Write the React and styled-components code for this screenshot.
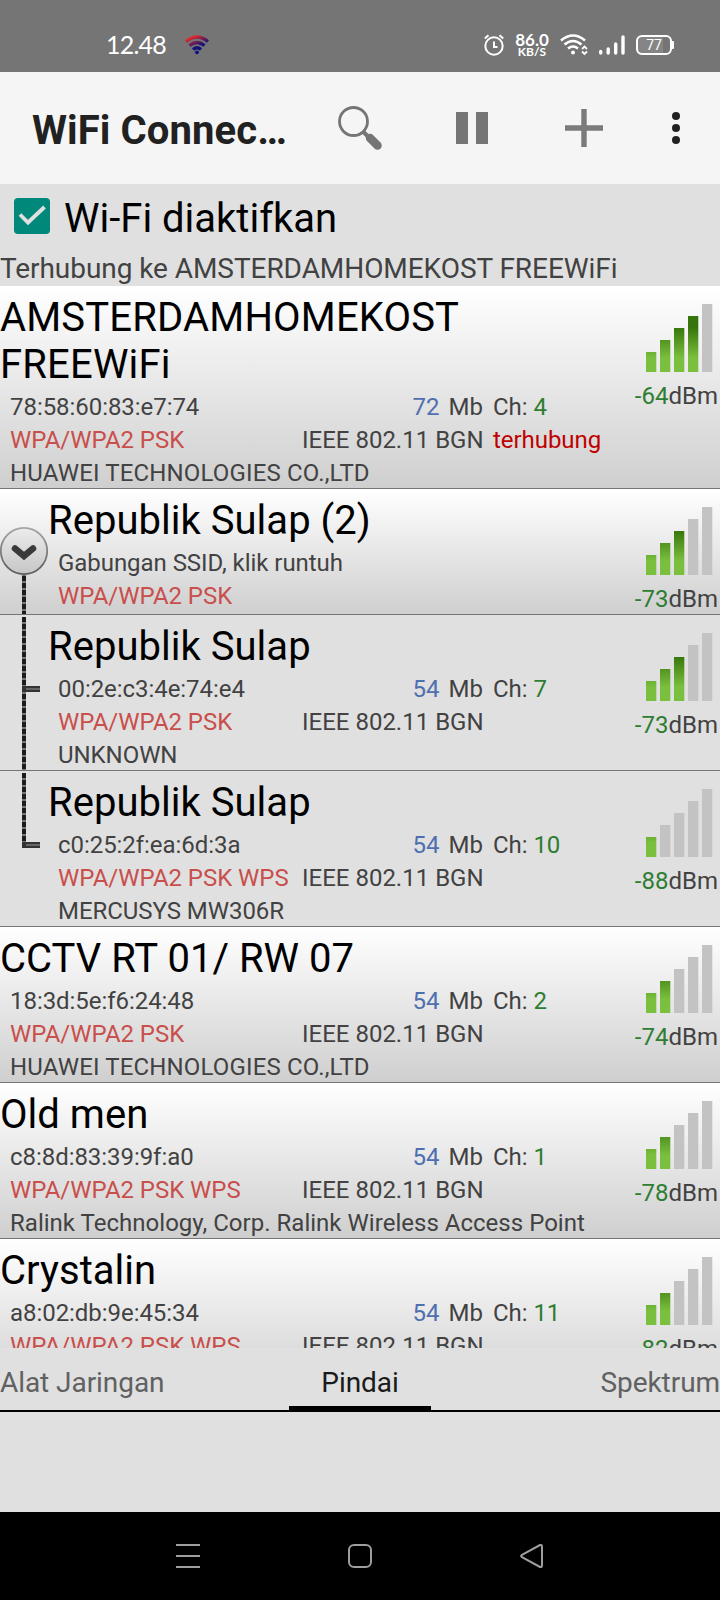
import React from "react";
import styled, { createGlobalStyle } from "styled-components";

const GlobalStyle = createGlobalStyle`
  * {
    box-sizing: border-box;
  }
  body {
    margin: 0;
    background: #e0e0e0;
    font-family: Roboto, "Noto Sans", sans-serif;
  }
`;

const Screen = styled.div`
  display: flex;
  flex-direction: column;
  width: 720px;
  height: 1600px;
  overflow: hidden;
  background: #e0e0e0;
`;

const StatusBar = styled.div`
  display: flex;
  justify-content: space-between;
  height: 72px;
  padding: 18px 48px 0 106px;
  background: #757575;
  color: #fff;
`;

const StatusGroup = styled.div`
  display: flex;
  align-items: center;
  height: 54px;
  gap: ${(props) => props.gap};
`;

const Clock = styled.span`
  margin-top: -2px;
  font-family: Lato, sans-serif;
  font-size: 25px;
  line-height: 54px;
  letter-spacing: -0.8px;
`;

const Speed = styled.div`
  display: flex;
  flex-direction: column;
  align-items: center;
  width: 34px;
  font-family: Lato, sans-serif;
  font-weight: 700;
  font-size: 17px;
  line-height: 13px;
  white-space: nowrap;

  small {
    font-size: 12px;
    line-height: 12px;
  }
`;

const Battery = styled.div`
  position: relative;
  width: 36px;
  height: 20px;
  border: 2px solid #fff;
  border-radius: 6px;
  font-size: 14px;
  line-height: 17px;
  text-align: center;
  background: linear-gradient(to right, #858585 77%, #757575 77%);

  &::after {
    content: "";
    position: absolute;
    right: -4px;
    top: 4px;
    width: 2px;
    height: 8px;
    background: #fff;
    border-radius: 0 1px 1px 0;
  }
`;

const AppBar = styled.header`
  display: flex;
  align-items: center;
  height: 112px;
  background: #f5f5f5;
`;

const AppTitle = styled.h1`
  width: 288px;
  margin: 5px 0 0;
  padding-left: 32px;
  font-size: 40px;
  font-weight: 700;
  line-height: 47px;
  letter-spacing: 0.1px;
  color: #212121;
  white-space: nowrap;
`;

const Action = styled.span`
  display: flex;
  align-items: center;
  justify-content: center;
  width: ${(props) => props.width};
  height: 112px;
`;

const WifiToggle = styled.label`
  display: flex;
  align-items: flex-start;
  height: 66px;
  padding: 14px 0 0 14px;
  font-size: 40px;
  line-height: 47px;
  color: #000;
`;

const CheckBox = styled.span`
  display: flex;
  width: 36px;
  height: 36px;
  margin-right: 14px;
  border-radius: 4px;
  background: #00897b;
`;

const ToggleText = styled.span`
  margin-top: -3px;
`;

const Connection = styled.div`
  height: 36px;
  font-size: 28px;
  line-height: 38px;
  letter-spacing: -0.06px;
  color: #424242;
`;

const List = styled.main`
  height: 1062px;
  overflow: hidden;
`;

const Row = styled.section`
  display: flex;
  height: ${(props) => props.height}px;
  border-bottom: 1px solid #757575;
  background: ${(props) => (props.child ? "#e0e0e0" : "linear-gradient(#fff, #cfcfcf)")};
`;

const Tree = styled.div`
  flex: none;
  width: 48px;
`;

const Body = styled.div`
  flex: 1;
  min-width: 0;
`;

const Ssid = styled.h2`
  margin: 0;
  padding: 8px 0 2px;
  font-size: 40px;
  font-weight: 400;
  line-height: 47px;
  letter-spacing: ${(props) => (props.wide ? "0.17px" : "0.03px")};
  color: #000;
`;

const Line = styled.div`
  display: flex;
  height: 33px;
  padding-left: 10px;
  font-size: 24px;
  line-height: 34px;
  letter-spacing: ${(props) => props.tracking || "-0.05px"};
  color: #424242;
  white-space: nowrap;
`;

const Left = styled.span`
  width: ${(props) => (props.nested ? 244 : 292)}px;
  color: ${(props) => props.color || "inherit"};
`;

const Middle = styled.span`
  width: 181px;
  margin-right: 10px;
  text-align: right;
  letter-spacing: 0;
`;

const Tint = styled.span`
  color: ${(props) => props.color};
  margin-right: ${(props) => props.gap || "0"};
`;

const Level = styled.div`
  display: flex;
  flex-direction: column;
  align-items: flex-end;
  width: 100px;
  padding: 16px 2px 0 0;
  font-size: 24px;
  line-height: 28px;
  color: #424242;

  svg {
    margin: 0 4px 10px 0;
  }
`;

const Tabs = styled.nav`
  display: grid;
  grid-template-columns: 1fr auto 1fr;
  height: 64px;
  border-bottom: 2px solid #000;
  font-size: 28px;
  line-height: 69px;
  letter-spacing: -0.06px;
`;

const Tab = styled.span`
  position: relative;
  height: 64px;
  text-align: ${(props) => props.align || "left"};
  color: ${(props) => (props.active ? "#1a1a1a" : "#616161")};

  &::after {
    content: "";
    display: ${(props) => (props.active ? "block" : "none")};
    position: absolute;
    left: -32px;
    right: -32px;
    bottom: 0;
    height: 6px;
    background: #000;
  }
`;

const NavBar = styled.footer`
  display: flex;
  align-items: center;
  justify-content: space-between;
  height: 88px;
  margin-top: 100px;
  padding: 0 175px;
  background: #000;
`;

const red = "#c94f4c";
const green = "#2e7d32";
const blue = "#4f6fb0";

const networks = [
  { ssid: "AMSTERDAMHOMEKOST FREEWiFi", mac: "78:58:60:83:e7:74", rate: 72, channel: 4, security: "WPA/WPA2 PSK", vendor: "HUAWEI TECHNOLOGIES CO.,LTD", dbm: -64, bars: 4, height: 203, connected: true },
  { ssid: "Republik Sulap (2)", info: "Gabungan SSID, klik runtuh", security: "WPA/WPA2 PSK", dbm: -73, bars: 3, height: 126, tree: "group" },
  { ssid: "Republik Sulap", mac: "00:2e:c3:4e:74:e4", rate: 54, channel: 7, security: "WPA/WPA2 PSK", vendor: "UNKNOWN", dbm: -73, bars: 3, height: 156, tree: "branch" },
  { ssid: "Republik Sulap", mac: "c0:25:2f:ea:6d:3a", rate: 54, channel: 10, security: "WPA/WPA2 PSK WPS", vendor: "MERCUSYS MW306R", dbm: -88, bars: 1, height: 156, tree: "last" },
  { ssid: "CCTV RT 01/ RW 07", mac: "18:3d:5e:f6:24:48", rate: 54, channel: 2, security: "WPA/WPA2 PSK", vendor: "HUAWEI TECHNOLOGIES CO.,LTD", dbm: -74, bars: 2, height: 156 },
  { ssid: "Old men", mac: "c8:8d:83:39:9f:a0", rate: 54, channel: 1, security: "WPA/WPA2 PSK WPS", vendor: "Ralink Technology, Corp. Ralink Wireless Access Point", dbm: -78, bars: 2, height: 156 },
  { ssid: "Crystalin", mac: "a8:02:db:9e:45:34", rate: 54, channel: 11, security: "WPA/WPA2 PSK WPS", vendor: "", dbm: -82, bars: 2, height: 156 },
];

const vendorTracking = (vendor) => {
  if (vendor.startsWith("HUAWEI")) return "0.15px";
  if (vendor.startsWith("Ralink")) return "0.02px";
  return "-0.05px";
};

function SignalBars({ bars }) {
  return (
    <svg width="68" height="70" viewBox="0 0 68 70">
      <defs>
        <linearGradient id="signal" gradientUnits="userSpaceOnUse" x1="0" y1="14" x2="0" y2="70">
          <stop offset="0.2" stopColor="#35750b" />
          <stop offset="0.75" stopColor="#7bbf3e" />
        </linearGradient>
      </defs>
      {[0, 1, 2, 3, 4].map((i) => (
        <rect
          key={i}
          x={i * 14}
          y={50 - i * 12}
          width="10.3"
          height={20 + i * 12}
          fill={i < bars ? "url(#signal)" : "#c3c3c3"}
        />
      ))}
    </svg>
  );
}

function TreeMark({ type, height }) {
  if (type === "group") {
    return (
      <svg width="48" height="125" viewBox="0 0 48 125">
        <defs>
          <linearGradient id="knob" x1="0" y1="0" x2="0" y2="1">
            <stop offset="0" stopColor="#ececec" />
            <stop offset="1" stopColor="#c6c6c6" />
          </linearGradient>
          <linearGradient id="knobEdge" x1="0" y1="0" x2="0" y2="1">
            <stop offset="0" stopColor="#a5a5a5" />
            <stop offset="1" stopColor="#5c5c5c" />
          </linearGradient>
        </defs>
        <path d="M24 86V125" stroke="#777" strokeWidth="4" />
        <path d="M24 87V125" stroke="#1c1c1c" strokeWidth="4" strokeDasharray="5 2" />
        <circle cx="24" cy="62" r="23.200" fill="url(#knob)" stroke="url(#knobEdge)" strokeWidth="1.800" />
        <path
          d="M15 59.500L24 67L33 59.500"
          fill="none"
          stroke="#3a3a3a"
          strokeWidth="6.500"
          strokeLinecap="round"
        />
      </svg>
    );
  }
  const end = type === "last" ? 76 : height - 1;
  return (
    <svg width="48" height="155" viewBox="0 0 48 155">
      <path d={`M24 2V${end}`} stroke="#777" strokeWidth="4" />
      <path d={`M24 2V${end}`} stroke="#1c1c1c" strokeWidth="4" strokeDasharray="5 2" />
      <path d="M22 74H40" stroke="#333" strokeWidth="6" />
      <path d="M26 74H40" stroke="#666" strokeWidth="2" />
    </svg>
  );
}

function NetworkRow({ network }) {
  const { ssid, mac, rate, channel, security, vendor, dbm, bars, height, tree, info, connected } = network;
  const nested = Boolean(tree);

  return (
    <Row height={height} child={tree === "branch" || tree === "last" ? 1 : 0}>
      {nested && (
        <Tree>
          <TreeMark type={tree} height={height} />
        </Tree>
      )}
      <Body>
        <Ssid wide={connected ? 1 : 0}>{ssid}</Ssid>
        {info ? (
          <Line>{info}</Line>
        ) : (
          <Line>
            <Left nested={nested ? 1 : 0}>{mac}</Left>
            <Middle>
              <Tint color={blue} gap="9px">{rate}</Tint>
              Mb
            </Middle>
            <span>
              Ch: <Tint color={green}>{channel}</Tint>
            </span>
          </Line>
        )}
        <Line>
          <Left nested={nested ? 1 : 0} color={red}>{security}</Left>
          {!info && <Middle>IEEE 802.11 BGN</Middle>}
          {connected && <Tint color="#c00000">terhubung</Tint>}
        </Line>
        {vendor && <Line tracking={vendorTracking(vendor)}>{vendor}</Line>}
      </Body>
      <Level>
        <SignalBars bars={bars} />
        <span>
          <Tint color={green}>{dbm}</Tint>dBm
        </span>
      </Level>
    </Row>
  );
}

function App() {
  return (
    <>
      <GlobalStyle />
      <Screen>
        <StatusBar>
          <StatusGroup gap="19px">
            <Clock>12.48</Clock>
            <svg width="24" height="20" viewBox="0 0 24 20" fill="none">
              <defs>
                <linearGradient id="wifi" gradientUnits="userSpaceOnUse" x1="8" y1="0" x2="14" y2="14">
                  <stop offset="0.1" stopColor="#e02a2a" />
                  <stop offset="0.85" stopColor="#10107c" />
                </linearGradient>
              </defs>
              <g stroke="url(#wifi)" strokeWidth="3.200">
                <path d="M1 6.500Q12 -2.500 23 6.500" />
                <path d="M4.500 10.500Q12 4.500 19.500 10.500" />
                <path d="M8 14.500Q12 11 16 14.500" />
              </g>
              <circle cx="12" cy="17.300" r="1.900" fill="#10107c" />
            </svg>
          </StatusGroup>
          <StatusGroup gap="11px">
            <svg width="20" height="22" viewBox="0 0 20 22" fill="none" stroke="#fff" strokeWidth="2">
              <circle cx="10" cy="12" r="8.700" />
              <path d="M10 7.500V13H13.500M0.800 4.500L4.500 1.300M19.200 4.500L15.500 1.300" />
            </svg>
            <Speed>
              86.0
              <small>KB/S</small>
            </Speed>
            <svg width="28" height="22" viewBox="0 0 28 22" fill="none" stroke="#fff" strokeWidth="2.600">
              <path d="M1 6.500Q13 -3.500 25 6.500M4.500 10.500Q13 3.500 21.500 10.500M8 14.500Q13 10.500 18 14.500" />
              <circle cx="13" cy="18.500" r="2" fill="#fff" stroke="none" />
              <path d="M22 15L24.500 12.500L27 15M22 17.500L24.500 20L27 17.500" strokeWidth="1.800" />
            </svg>
            <svg width="26" height="22" viewBox="0 0 26 22" stroke="#fff" strokeWidth="3.400" strokeLinecap="round">
              <path d="M1.700 17.500V19M9.200 15V19M16.700 10V19M24 3V19" />
            </svg>
            <Battery>77</Battery>
          </StatusGroup>
        </StatusBar>
        <AppBar>
          <AppTitle>WiFi Connec…</AppTitle>
          <Action width="144px">
            <svg width="46" height="46" viewBox="0 0 46 46" fill="none" stroke="#757575">
              <circle cx="16.500" cy="16.500" r="14" strokeWidth="2.800" />
              <path d="M26 26.500L32 32.500" strokeWidth="4" />
              <path d="M33 33L40.500 40.500" strokeWidth="8.500" strokeLinecap="round" />
            </svg>
          </Action>
          <Action width="80px">
            <svg width="32" height="32" viewBox="0 0 32 32" fill="#757575">
              <path d="M0 0H12V32H0ZM20 0H32V32H20Z" />
            </svg>
          </Action>
          <Action width="144px">
            <svg width="38" height="38" viewBox="0 0 38 38" fill="#7b7b7b">
              <path d="M16.300 0H21.700V16.300H38V21.700H21.700V38H16.300V21.700H0V16.300H16.300Z" />
            </svg>
          </Action>
          <Action width="40px">
            <svg width="8" height="32" viewBox="0 0 8 32" fill="#212121">
              <circle cx="4" cy="4" r="4" />
              <circle cx="4" cy="16" r="4" />
              <circle cx="4" cy="28" r="4" />
            </svg>
          </Action>
        </AppBar>
        <WifiToggle>
          <CheckBox>
            <svg width="36" height="36" viewBox="0 0 36 36" fill="none" stroke="#e0e0e0" strokeWidth="3.800">
              <path d="M6 16.500L14 24.500L30.500 9" />
            </svg>
          </CheckBox>
          <ToggleText>Wi-Fi diaktifkan</ToggleText>
        </WifiToggle>
        <Connection>Terhubung ke AMSTERDAMHOMEKOST FREEWiFi</Connection>
        <List>
          {networks.map((network, index) => (
            <NetworkRow key={index} network={network} />
          ))}
        </List>
        <Tabs>
          <Tab>Alat Jaringan</Tab>
          <Tab active={1}>Pindai</Tab>
          <Tab align="right">Spektrum</Tab>
        </Tabs>
        <NavBar>
          <svg width="26" height="26" viewBox="0 0 26 26" stroke="#9e9e9e" strokeWidth="2">
            <path d="M1 2H25M1 13H25M1 24H25" />
          </svg>
          <svg width="26" height="26" viewBox="0 0 26 26" fill="none" stroke="#9e9e9e" strokeWidth="2">
            <rect x="2" y="2" width="22" height="22" rx="5" />
          </svg>
          <svg width="26" height="26" viewBox="0 0 26 26" fill="none" stroke="#9e9e9e" strokeWidth="2">
            <path d="M3 11.800L21 2Q23 1.500 23 3.500V22.500Q23 24.500 21 24L3 14.200Q1.200 13 3 11.800Z" />
          </svg>
        </NavBar>
      </Screen>
    </>
  );
}

export default App;
